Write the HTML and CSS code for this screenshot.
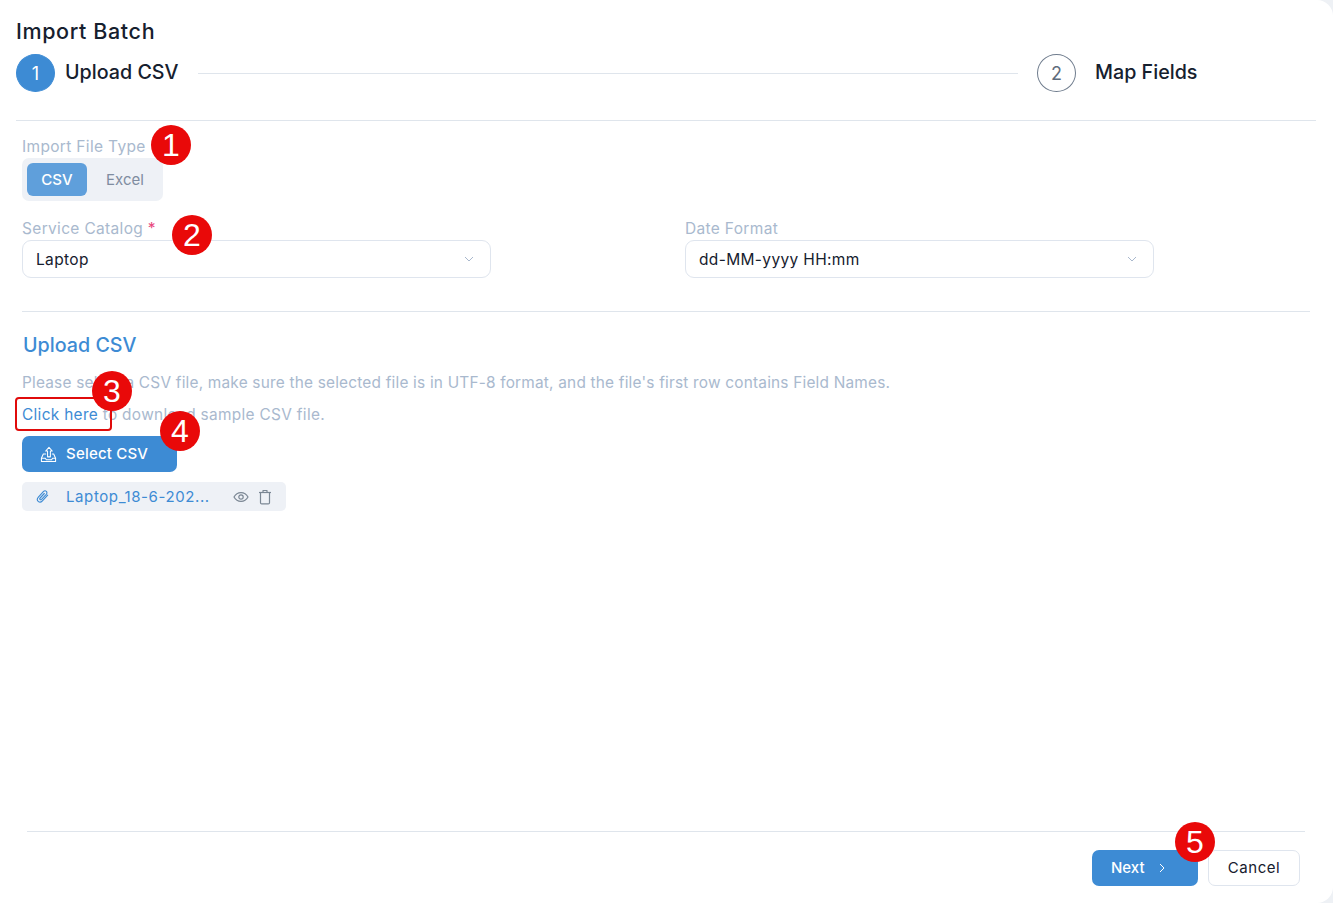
FILE: index.html
```html
<!DOCTYPE html>
<html lang="en">
<head>
<meta charset="utf-8">
<title>Import Batch</title>
<link rel="stylesheet" href="styles.css">
</head>
<body>
<main class="panel">
  <header class="head">
    <h1 class="title">Import Batch</h1>
    <div class="stepper">
      <div class="step">
        <span class="step-num step-num-active">1</span>
        <span class="step-label">Upload CSV</span>
      </div>
      <span class="step-line"></span>
      <div class="step step-last">
        <span class="step-num">2</span>
        <span class="step-label">Map Fields</span>
      </div>
    </div>
  </header>

  <section class="form">
    <div class="type-field">
      <span class="label">Import File Type</span>
      <div class="toggle">
        <span class="toggle-on">CSV</span>
        <span class="toggle-off">Excel</span>
      </div>
      <span class="badge badge-1">1</span>
    </div>

    <div class="select-row">
      <div class="field">
        <span class="label">Service Catalog <span class="req">*</span></span>
        <div class="select">
          <span>Laptop</span>
          <svg class="chev" viewBox="0 0 10 6" width="10" height="6"><path d="M1 1l4 4 4-4" fill="none" stroke="#a9b8cd" stroke-width="1"/></svg>
        </div>
        <span class="badge badge-2">2</span>
      </div>
      <div class="field">
        <span class="label">Date Format</span>
        <div class="select">
          <span>dd-MM-yyyy HH:mm</span>
          <svg class="chev" viewBox="0 0 10 6" width="10" height="6"><path d="M1 1l4 4 4-4" fill="none" stroke="#a9b8cd" stroke-width="1"/></svg>
        </div>
      </div>
    </div>
  </section>

  <section class="upload">
    <h2 class="upload-title">Upload CSV</h2>
    <p class="hint hint-first">Please select a CSV file, make sure the selected file is in UTF-8 format, and the file's first row contains Field Names.</p>
    <p class="hint hint-second"><a class="link" href="#">Click here</a> to download sample CSV file.</p>
    <div class="action">
      <button class="btn btn-select" type="button">
        <svg viewBox="0 0 18 18" width="17" height="17" fill="none" stroke="#fff" stroke-width="1.1" stroke-linejoin="round" stroke-linecap="round"><path d="M9.500 1.500L6 5.300h2v6.200h3V5.300h2z"/><path d="M6 8.500H3.500L1.500 13v3.500h15V13l-2-4.500H13"/><path d="M1.500 13h4.200l1 1.500h5.600l1-1.500h3.200"/></svg>
        <span class="btn-text">Select CSV</span>
      </button>
      <span class="outline-box"></span>
      <span class="badge badge-3">3</span>
      <span class="badge badge-4">4</span>
    </div>
    <div class="file">
      <svg class="clip" viewBox="0 0 16 16" width="15" height="15" fill="none" stroke="#3d8bd4" stroke-width="1.2" stroke-linecap="round"><path d="M13.500 6.500l-5.600 6.200c-1.300 1.400-3.300 1.600-4.500.5s-1.100-3 .2-4.500l5.300-5.800c.9-1 2.300-1.200 3.200-.4s.8 2.200-.1 3.200L7 11c-.5.5-1.200.6-1.600.2s-.4-1.100.1-1.600l4.400-4.800"/></svg>
      <span class="file-name">Laptop_18-6-202...</span>
      <svg class="eye" viewBox="0 0 16 16" width="16" height="16" fill="none" stroke="#7b8794" stroke-width="1.2"><path d="M1 8c1.600-2.900 4-4.400 7-4.400s5.400 1.500 7 4.400c-1.600 2.900-4 4.400-7 4.400S2.600 10.900 1 8z"/><circle cx="8" cy="8" r="2.200"/></svg>
      <svg class="trash" viewBox="0 0 14 16" width="14" height="16" fill="none" stroke="#7b8794" stroke-width="1.200" stroke-linejoin="round"><path d="M1 3.500h12"/><path d="M5 3.500V1.500h4v2"/><path d="M2.500 3.500v10.200c0 .7.500 1.200 1.200 1.200h6.600c.7 0 1.200-.5 1.200-1.200V3.500"/></svg>
    </div>
  </section>

  <footer class="foot">
    <div class="foot-actions">
      <button class="btn btn-next" type="button">
        <span class="btn-text">Next</span>
        <svg viewBox="0 0 6 10" width="6" height="10"><path d="M1 1l4 4-4 4" fill="none" stroke="#fff" stroke-width="1"/></svg>
        <span class="badge badge-5">5</span>
      </button>
      <button class="btn btn-cancel" type="button"><span class="btn-text">Cancel</span></button>
    </div>
  </footer>
</main>
</body>
</html>
```
FILE: styles.css
```css
* { box-sizing: border-box; }
html, body { margin: 0; height: 100%; }
body {
  background: #eef1f5;
  font-family: "Inter", "Open Sans", sans-serif;
  color: #16202e;
  width: 1333px;
  height: 903px;
  overflow: hidden;
}
.panel {
  position: relative;
  width: 1333px;
  height: 903px;
  background: #fff;
  border-radius: 0 16px 16px 0;
  padding: 16px 17px 0 16px;
  display: flex;
  flex-direction: column;
}
.head { height: 105px; border-bottom: 1px solid #dfe5ec; }
.title { margin: 0; font-size: 21.500px; line-height: 30px; font-weight: 500; letter-spacing: .62px; color: #16202e; }
.stepper { display: flex; align-items: center; margin-top: 8px; }
.step { display: flex; align-items: center; gap: 10px; }
.step-last { width: 279px; gap: 19px; margin-left: 19px; }
.step-num {
  width: 39px; height: 38px; border-radius: 50%;
  border: 1px solid #6f7c8d; color: #5f6c7c;
  display: flex; align-items: center; justify-content: center;
  font-size: 18px;
}
.step-num-active { background: #3d8bd4; border-color: #3d8bd4; color: #fff; }
.step-label { font-size: 19.700px; font-weight: 500; color: #16202e; margin-bottom: 2px; }
.step-line { flex: 1; height: 1px; background: #dfe5ec; margin-left: 19px; }

.form { padding: 0 6px; }
.label { display: block; font-size: 15.500px; line-height: 22px; letter-spacing: .33px; color: #a9b9ce; }
.req { color: #e8467c; }
.type-field { position: relative; padding-top: 15px; height: 97px; }
.toggle {
  width: 141px; height: 43px; padding: 5px;
  background: #eef1f6; border-radius: 7px;
  display: flex; align-items: center; font-size: 15px;
}
.toggle-on {
  width: 60px; height: 33px; border-radius: 6px;
  background: #5f9fdb; color: #fff; font-weight: 500;
  display: flex; align-items: center; justify-content: center;
}
.toggle-off { flex: 1; text-align: center; color: #7f8ca0; padding-left: 5px; }
.select-row { display: flex; gap: 194px; }
.field { position: relative; width: 469px; }
.select {
  height: 38px; border: 1px solid #dfe5ee; border-radius: 9px;
  padding: 0 16px 0 13px; margin-top: 0;
  display: flex; align-items: center; justify-content: space-between;
  font-size: 15.500px; letter-spacing: .35px; color: #16202e;
}
.upload {
  margin: 33px 6px 0; border-top: 1px solid #dfe5ec; padding-top: 19px;
}
.upload-title { margin: 0 0 0 1px; font-size: 19.700px; line-height: 28px; font-weight: 500; color: #3d8bd4; }
.hint { margin: 0; font-size: 15.400px; line-height: 22px; letter-spacing: .2px; color: #a9b9ce; white-space: nowrap; }
.hint-first { margin-top: 13px; }
.hint-second { margin-top: 10px; letter-spacing: .32px; }
.link { color: #3d8bd4; text-decoration: none; }
.action { position: relative; margin-top: 10px; height: 36px; }
.btn {
  font-family: inherit; font-size: 15px; border-radius: 7px; border: 0;
  display: inline-flex; align-items: center; cursor: pointer;
}
.btn-text { margin-bottom: 2px; }
.btn-select {
  width: 155px; height: 36px; background: #3d8bd4; color: #fff;
  padding: 0 0 0 18px; gap: 9px; font-weight: 500; letter-spacing: .2px;
}
.outline-box {
  position: absolute; left: -7px; top: -39px;
  width: 97px; height: 34px;
  border: 2px solid #e00b0b; border-radius: 4px;
}
.file {
  margin-top: 10px; width: 264px; height: 29px;
  background: #eef1f6; border-radius: 5px;
  display: flex; align-items: center; padding-left: 13px;
}
.clip { flex: none; }
.file-name { margin-left: 16px; width: 167px; font-size: 15px; letter-spacing: .6px; color: #3d8bd4; white-space: nowrap; }
.trash { margin-left: 9px; }

.foot {
  position: absolute; left: 27px; right: 28px; top: 831px;
  border-top: 1px solid #dfe5ec;
}
.foot-actions { display: flex; justify-content: flex-end; gap: 10px; padding: 18px 5px 0 0; }
.btn-next {
  position: relative; width: 106px; height: 36px;
  background: #3d8bd4; color: #fff; padding-left: 19px; gap: 14px; font-weight: 500;
}
.btn-cancel {
  width: 92px; height: 36px; background: #fff; color: #16202e; letter-spacing: .55px;
  border: 1px solid #dfe5ee; justify-content: center;
}

.badge {
  position: absolute; width: 40px; height: 40px; border-radius: 50%;
  background: #e90909; color: #fff;
  font-family: "Liberation Sans", sans-serif; font-size: 32px; line-height: 40px; letter-spacing: 0;
  text-align: center; font-weight: 400;
}
.badge-1 { left: 129px; top: 4px; }
.badge-2 { left: 150px; top: -3px; }
.badge-3 { left: 70px; top: -65px; }
.badge-4 { left: 138px; top: -25px; }
.badge-5 { left: 83px; top: -28px; }
```
